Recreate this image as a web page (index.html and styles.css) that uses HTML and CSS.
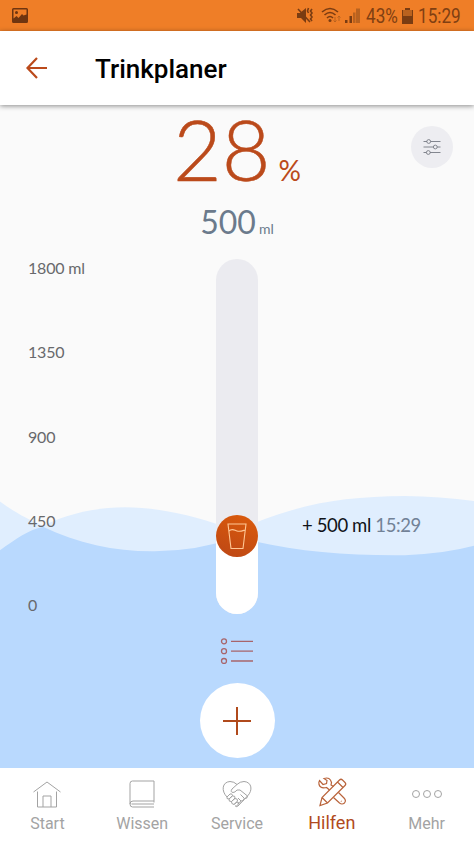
FILE: index.html
```html
<!DOCTYPE html>
<html lang="de">
<head>
<meta charset="utf-8">
<title>Trinkplaner</title>
<link rel="stylesheet" href="styles.css">
</head>
<body>
<div class="status">
  <svg class="status-pic" width="16" height="16" viewBox="0 0 16 16"><path fill-rule="evenodd" d="M1.500 0h13A1.500 1.500 0 0 1 16 1.500v12a1.500 1.500 0 0 1-1.500 1.500h-13A1.500 1.500 0 0 1 0 13.500v-12A1.500 1.500 0 0 1 1.500 0zM1.500 1.500v9l3-2.500 2 2 3.500-4 1.500 1.500 3-1v-5z"/><circle cx="4.500" cy="4.500" r="1.500"/></svg>
  <div class="status-right">
    <svg width="65" height="18" viewBox="295 7 65 18" fill="none">
      <path class="ink" d="M296 13h3l6-5v15l-5-5h-4z"/>
      <path class="line" d="M297 9l12 13M307.500 8l-1 3 1 2M311 9l-1.500 2 1.500 2-1.500 2 1.500 2-1.500 2 1.500 2"/>
      <path class="line" d="M321 12q8-7 16 0M323.500 15q5.500-5 11 0M326 18q3-3 6 0"/>
      <circle class="ink" cx="329" cy="20.500" r="1.500"/>
      <path class="faint-line" d="M334 17v5m-1.500-1.500l1.500 1.500 1.500-1.500M338 21v-5m-1.500 1.500l1.500-1.500 1.500 1.500"/>
      <path class="ink" d="M344 20h2.500v3H344zM348.500 16h2.500v7h-2.500z"/>
      <path class="faint" d="M352 12.500h2.500v10.500H352zM355 8.500h4v14.500h-4z"/>
    </svg>
    <span class="stat-text pct">43%</span>
    <svg class="battery" width="11" height="16" viewBox="0 0 11 16"><path class="faint" d="M3 0h5v2h3v7H0V2h3z"/><path class="ink" d="M0 8h11v8H0zM3 0h5v2H3zM0 2h1v6H0zM10 2h1v6h-1z"/></svg>
    <span class="stat-text clock">15:29</span>
  </div>
</div>
<header class="bar">
  <svg width="22" height="22" viewBox="0 0 22 22" fill="none" stroke="#bb4a1b" stroke-width="2.200"><path d="M11 1L1.500 11l9.500 10M1.500 11H21"/></svg>
  <h1>Trinkplaner</h1>
</header>
<main class="planner">
  <svg class="waves" viewBox="0 106 474 662" preserveAspectRatio="none">
    <path fill="#e0eefe" d="M0 502C14 512 26 519 43 526C92 503 145 501 216 524L237 531C294 505 340 497 405 496.500Q440 497 474 501.500V768H0z"/>
    <path fill="#b9d9fe" d="M0 550.500C16 539 29 530 43 527C78 544 117 552 155 551.500Q198 551 237 537.500C292 552 342 556 405 555.500Q444 554 474 546V768H0z"/>
  </svg>
  <button class="settings" aria-label="Einstellungen"><svg width="18" height="16" viewBox="0 0 18 16" fill="none" stroke="#777b83" stroke-width=".9"><path d="M.5 2.500H4M7.500 2.500h10M.5 8h10M14 8h3.500M.5 13.500h3M7 13.500h10.500"/><circle cx="5.700" cy="2.500" r="1.900"/><circle cx="12.300" cy="8" r="1.900"/><circle cx="5.300" cy="13.500" r="1.900"/></svg></button>
  <div class="percent"><span>28</span><small>%</small></div>
  <div class="amount"><span>500</span><small>ml</small></div>
  <section class="chart">
    <div class="scale"><span>1800 ml</span><span>1350</span><span>900</span><span>450</span><span>0</span></div>
    <div class="track"><div class="fill"><div class="knob"><svg width="20" height="28" viewBox="0 0 20 28" fill="none" stroke="#ffc795" stroke-width="1.100"><path d="M1 2h18l-3 24.500H4zM2 9c3-3 5-1 8 0s5 0 8-1"/></svg></div></div></div>
    <p class="entry">+ 500 ml <time>15:29</time></p>
  </section>
  <svg class="list" width="34" height="26" viewBox="0 0 34 26" fill="none" stroke="#a8656b" stroke-width="1.300"><circle cx="4" cy="3.300" r="2.500"/><circle cx="4" cy="13.200" r="2.500"/><circle cx="4" cy="23" r="2.500"/><path d="M11 3.300h22M11 13.200h22M11 23h22"/></svg>
  <button class="add" aria-label="Hinzufügen"><svg width="28" height="28" viewBox="0 0 28 28" stroke="#b04a1c" stroke-width="2"><path d="M14 0v28M0 14h28"/></svg></button>
</main>
<nav class="tabs">
  <a class="tab"><svg width="30" height="30" viewBox="0 0 30 30"><path d="M1.500 13L15 3l13.500 10M5.500 12.500V28h19V12.500M11 28V17h8v11"/></svg><span>Start</span></a>
  <a class="tab"><svg width="30" height="30" viewBox="0 0 30 30"><path d="M27 28H5.500Q3 28 3 25V4.500Q3 2 5.500 2H27v20H6Q3 22 3 25M4.500 25H27M27 22v1.500"/></svg><span>Wissen</span></a>
  <a class="tab"><svg width="30" height="30" viewBox="0 0 30 30"><path d="M5 18C-1 12 0 3 8 2.500q4 0 7 3 3-3 7-3c8 .5 9 9 3.500 14.500L16 27q-2 1.500-3-.5M15 5.500L10 10q-2 3 1 3.500 2 0 4-2.500h3l7.500 6q0 3-3 2.500l-4-4m3.500 4q0 3-3 2.500l-3-3m2.500 3q0 3-3 2"/><path d="M5 18l3-3q2-1 2.500 1.500L7 20Q4 20 5 18zM7 20l3.500-3q3-.5 2.500 2l-3.500 3.500Q6.500 23 7 20zM9.500 22.500L13 19.500q3 0 2.500 2.500L12 25.500Q9 25 9.500 22.500zM12 25.500l3-2.500q2 0 1.500 2L14 27.500"/></svg><span>Service</span></a>
  <a class="tab active"><svg width="32" height="30" viewBox="0 0 32 30"><path d="M4 28.500L6 20.500 23.500 3q1.500-1.500 3 0l2.500 2.500q1.500 1.500 0 3L11.500 26zM6 20.500l5.500 5.500M21.500 5l5.500 5.500"/><path d="M13.500 13L10.500 10.500Q4.500 12 3 7.500 2.500 5 3.500 3.500L7 7.500 10.500 6.500 11 3.500 8 1.500Q14-.5 15.500 5.500L15 8l2.500 1.500M22.500 15.500l5.500 5.500q2.500 2.500.5 5-2.500 2-5 0L17.500 20.500M25 24l.5.500"/></svg><span>Hilfen</span></a>
  <a class="tab"><svg width="30" height="30" viewBox="0 0 30 30"><circle cx="4" cy="15" r="3.500"/><circle cx="15" cy="15" r="3.500"/><circle cx="26" cy="15" r="3.500"/></svg><span>Mehr</span></a>
</nav>
</body>
</html>
```
FILE: styles.css
```css
* { box-sizing: border-box; }
body {
  margin: 0;
  width: 474px;
  height: 842px;
  display: flex;
  flex-direction: column;
  overflow: hidden;
  background: #fafafa;
  font-family: Lato, sans-serif;
}
button { border: 0; padding: 0; display: grid; place-items: center; border-radius: 50%; }

.status {
  height: 31px;
  flex: none;
  display: flex;
  justify-content: space-between;
  align-items: center;
  padding: 0 13px 0 12px;
  background: #ef7e27;
  color: #803f12;
  font: 19.5px/31px Roboto, sans-serif;
}
.status-pic { fill: #6f3510; }
.status-right { display: flex; align-items: center; }
.status-right svg { flex: none; }
.ink { fill: #7a3c12; }
.line { stroke: #7a3c12; stroke-width: 1.6; }
.faint { fill: #b9621f; }
.faint-line { stroke: #b9621f; stroke-width: 1; }
.stat-text { transform: scaleX(.88); transform-origin: left; white-space: nowrap; padding-top: 2px; }
.pct { width: 31px; margin-left: 5px; }
.battery { margin-left: 5px; }
.clock { width: 43px; margin-left: 5px; }

.bar {
  position: relative;
  z-index: 2;
  height: 74px;
  flex: none;
  display: flex;
  align-items: center;
  gap: 47px;
  padding-left: 26px;
  background: #fff;
  box-shadow: 0 1px 5px rgba(0, 0, 0, .45);
}
.bar h1 { margin: 2px 0 0; font: 500 26px/30px Roboto, sans-serif; color: #000; }

.planner {
  position: relative;
  height: 663px;
  flex: none;
  display: flex;
  flex-direction: column;
  align-items: center;
}
.planner > * { position: relative; }
.planner .waves { position: absolute; inset: 0; width: 100%; height: 100%; }
.planner .settings {
  position: absolute;
  top: 21px;
  right: 21px;
  width: 42px;
  height: 42px;
  background: #ededf1;
}
.percent {
  height: 94px;
  display: flex;
  align-items: baseline;
  gap: 8px;
  color: #bb4a1b;
  font-weight: 300;
  font-size: 84px;
  line-height: 88px;
}
.percent span { -webkit-text-stroke: .5px #bb4a1b; }
.percent small { font-size: 28px; font-weight: 400; }
.amount {
  height: 40px;
  display: flex;
  align-items: baseline;
  gap: 3px;
  color: #6b7a8c;
  font-size: 32px;
  line-height: 46px;
}
.amount small { font-size: 14px; }

.chart {
  width: 100%;
  height: 355px;
  margin-top: 20px;
  display: grid;
  grid-template-columns: 188px 42px 1fr;
  padding-left: 28px;
}
.scale {
  display: flex;
  flex-direction: column;
  justify-content: space-between;
  height: 357px;
  margin-top: -1px;
  color: #68696c;
  font-size: 16px;
  letter-spacing: -.2px;
  line-height: 20px;
}
.track {
  display: flex;
  align-items: flex-end;
  height: 355px;
  border-radius: 21px;
  background: #ebebf0;
  overflow: hidden;
}
.fill { width: 42px; height: 99px; background: linear-gradient(#ebebf0 21px, #fff 21px); }
.knob {
  width: 42px;
  height: 42px;
  display: grid;
  place-items: center;
  border-radius: 50%;
  background: linear-gradient(20deg, #bc4716, #dc5b0b);
}
.entry { margin: 254px 0 0 44px; font-size: 18.5px; letter-spacing: -.38px; line-height: 24px; color: #101318; white-space: nowrap; }
.entry time { color: #728297; }
.list { margin-top: 24px; }
.add { width: 75px; height: 75px; margin-top: 19px; background: #fff; }

.tabs {
  height: 74px;
  flex: none;
  display: grid;
  grid-template-columns: repeat(5, 1fr);
  background: #fff;
  padding-top: 11px;
}
.tab {
  display: flex;
  flex-direction: column;
  align-items: center;
  color: #a3a3a3;
  font: 16px/20px Roboto, sans-serif;
}
.tab svg { fill: none; stroke: #a3a3a3; stroke-width: 1; overflow: visible; }
.tab span { margin-top: 5px; }
.active { color: #b14a20; font-size: 18px; }
.active svg { stroke: #b9633a; stroke-width: 1.2; margin-top: -2px; }
.active span { margin-top: 6px; }
```
